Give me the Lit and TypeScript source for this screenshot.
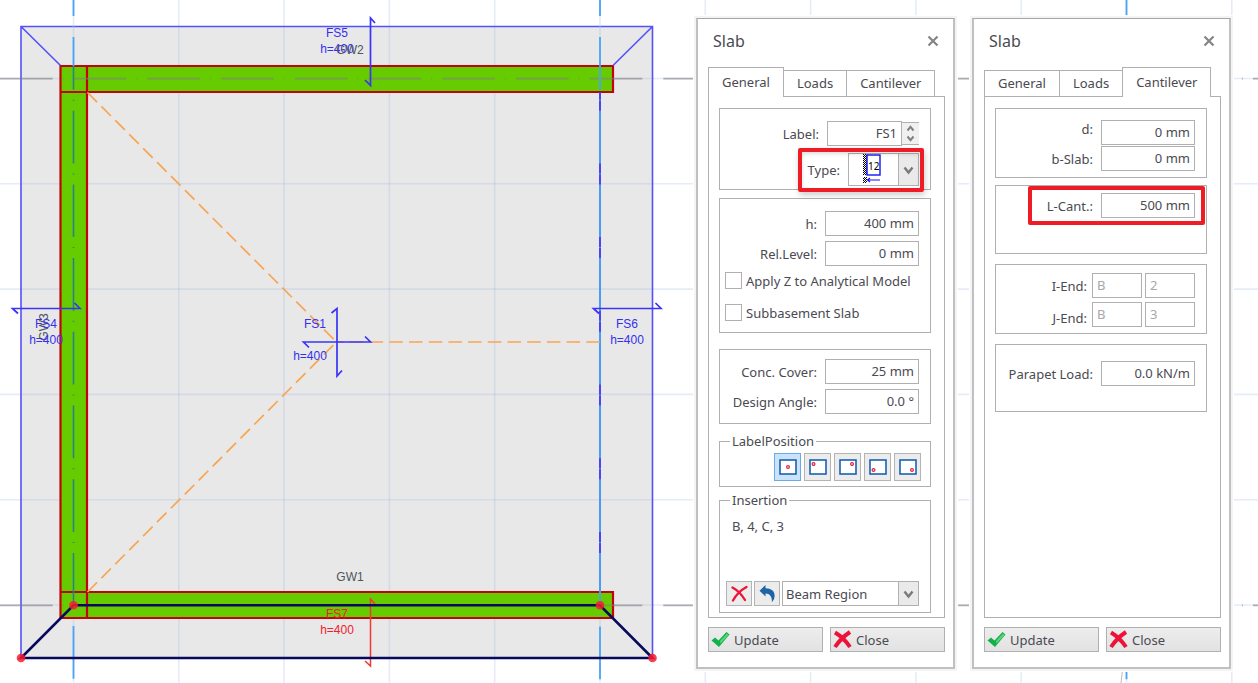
import { LitElement, html, svg, css, nothing } from "lit";
import { customElement, property, state } from "lit/decorators.js";
import { classMap } from "lit/directives/class-map.js";

type Tab = "General" | "Loads" | "Cantilever";
const TABS: Tab[] = ["General", "Loads", "Cantilever"];

const chevron = svg`<path d="M1.5 2.5 L5.5 7.5 L9.5 2.5" fill="none" stroke="#7a7a7a" stroke-width="2.4"/>`;

/** Plan view: grid, walls, slabs and their labels. */
@customElement("plan-view")
class PlanView extends LitElement {
  static styles = css`
    :host { display: block; }
    svg { display: block; width: 100%; height: 100%; }
    text { font: 12px "Liberation Sans", Arial, sans-serif; text-anchor: middle; }
    .grid { stroke: #96b4e1; stroke-opacity: 0.25; stroke-width: 1.6; }
    .slab { fill: #e8e8e8; }
    .wall { fill: #66cc00; }
    .wall-edge { fill: none; stroke: #c0040c; stroke-width: 2.2; }
    .edge { fill: none; stroke: #5450fa; stroke-width: 1.6; }
    .hinge { stroke: #3c34f4; stroke-width: 1.8; }
    .axis { stroke-dasharray: 52.7 10 1 10; fill: none; }
    .axis-h { stroke: #808080; stroke-opacity: 0.6; stroke-width: 1.8; }
    .axis-v { stroke: #4aa4fa; stroke-width: 1.8; }
    .axis-wall { stroke: #27858a; stroke-width: 1.6; }
    .yield { fill: none; stroke: #f8a552; stroke-width: 1.7; stroke-dasharray: 13.5 6.2; }
    .span { fill: none; stroke: #3a34f6; stroke-width: 1.7; }
    .name { fill: #3430f0; }
    .wall-name { fill: #4c5560; }
    .picked { fill: #f02028; }
    .span-picked { fill: none; stroke: #f0383a; stroke-width: 1.5; }
    .selection { fill: none; stroke: #08085c; stroke-width: 2.6; }
    .node { fill: #f81c30; fill-opacity: 0.85; }
    .stray { stroke: #bbb; }
  `;

  private tag(x: number, y: number, name: string, cls = "name", dx = 0, gap = 16) {
    return svg`<text class=${cls} x=${x} y=${y}>${name}</text>
      <text class=${cls} x=${x + dx} y=${y + gap}>h=400</text>`;
  }

  render() {
    const cols = Array.from({ length: 12 }, (_, i) => 73.5 + i * 105.3);
    const rows = Array.from({ length: 6 }, (_, i) => 78.5 + i * 105.3);
    return html`<svg role="img" aria-label="Slab plan">
      <rect class="slab" x="21" y="26" width="632" height="632" />
      ${cols.map((x) => svg`<line class="grid" x1=${x} y1="0" x2=${x} y2="100%"/>`)}
      ${rows.map((y) => svg`<line class="grid" x1="0" y1=${y} x2="100%" y2=${y}/>`)}
      <rect class="wall" x="61" y="66" width="552" height="26" />
      <rect class="wall" x="61" y="66" width="26" height="552" />
      <rect class="wall" x="61" y="592" width="552" height="26" />
      <path class="wall-edge" d="M60.5 66H613V92H60.5M60.5 592H613V618H60.5M60.5 65V619M87 66V618" />
      <path class="edge" d="M21 658V26.500H652.500V658M21 26.500L60.500 65.500M652.500 26.500L613 65.500" />
      <line class="hinge" x1="600" y1="92" x2="600" y2="592" />
      <line class="axis axis-h" x1="0" y1="78.700" x2="100%" y2="78.700" />
      <line class="axis axis-h" x1="0" y1="605.300" x2="100%" y2="605.300" />
      <line class="axis axis-v" x1="73.500" y1="-36.700" x2="73.500" y2="66" />
      <line class="axis axis-wall" stroke-dashoffset="29" x1="73.500" y1="66" x2="73.500" y2="605" />
      <line class="axis axis-v" x1="73.500" y1="626" x2="73.500" y2="683" />
      <line class="axis axis-v" x1="600" y1="-36.700" x2="600" y2="683" />
      <line class="axis axis-v" x1="1126.500" y1="-36.700" x2="1126.500" y2="683" />
      <line class="stray" x1="1122.500" y1="670" x2="1121" y2="683" />
      <path class="yield" d="M87.500 92.500L336.500 342M87.500 592L336.500 342" />
      <line class="yield" stroke-dashoffset="5.800" x1="336" y1="342" x2="600" y2="342" />
      <path class="span" d="M309 347.500L303.500 342H370.500L365 336.500" />
      <path class="span" d="M331.500 313L337 308.500V376L342 370.500" />
      <path class="span" d="M18 313.500L12.500 308.500H80L74.500 303" />
      <path class="span" d="M599 313.500L593.500 308.500H661L655.500 303" />
      <path class="span" d="M375 23L370.500 18V85.500L365 80" />
      ${this.tag(337, 37, "FS5")}
      <text class="wall-name" x="350" y="54">GW2</text>
      <text class="wall-name" x="350" y="581">GW1</text>
      <text class="wall-name" transform="translate(48 327) rotate(-90)">GW3</text>
      ${this.tag(315, 328, "FS1", "name", -5, 32)}
      ${this.tag(46, 328, "FS4")}
      ${this.tag(627, 328, "FS6")}
      ${this.tag(337, 618, "FS7", "picked")}
      <path class="span-picked" d="M375 604L370.500 599V666L365 661" />
      <path class="selection" d="M73.500 605.300H600L652.500 658H21Z" />
      ${[[73.5, 605.3], [600, 605.3], [652.5, 658], [21, 658]].map(
        ([x, y]) => svg`<circle class="node" cx=${x} cy=${y} r="4.3"/>`
      )}
    </svg>`;
  }
}

/** Slab properties dialog. */
@customElement("slab-dialog")
class SlabDialog extends LitElement {
  @property() tab: Tab = "General";
  @state() private position = 0;

  static styles = css`
    :host {
      display: flex;
      flex-direction: column;
      box-sizing: border-box;
      width: 259px;
      padding: 0 8px 16px 10px;
      background: #fff;
      border: 2px solid #c0c0c0;
      border-top: 1px solid #a6a6a6;
      box-shadow: 0 0 0 2px #f4f4f4, 0 0 0 3px #fff;
      font: 13px/18px "Noto Sans", "Open Sans", Tahoma, sans-serif;
      color: #4a4a52;
    }
    * { box-sizing: border-box; }
    button, input, select { font: inherit; color: inherit; margin: 0; border-radius: 0; }
    header { display: flex; align-items: center; justify-content: space-between; height: 48px; padding: 0 4px 4px 5px; }
    h1 { margin: 0; font-size: 16px; line-height: 24px; font-weight: 400; }
    .close { display: flex; width: 16px; height: 16px; padding: 2px; border: 0; background: none; }
    .tabs { display: flex; align-items: flex-end; height: 29px; position: relative; z-index: 1; }
    .tab { height: 26px; padding: 0 13px 1px; background: #fff; border: 1px solid #b0b0b0; border-bottom: 0; margin-left: -1px; }
    .tab:first-child { margin-left: 0; }
    .tab.active { height: 30px; padding-bottom: 2px; margin-bottom: -1px; }
    .panel { flex: 1; padding: 11px 13px 4px 10px; border: 1px solid #b0b0b0; }
    .group {
      display: flex;
      flex-direction: column;
      min-width: 0;
      margin: 0;
      border: 1px solid #b0b0b0;
      padding: 8px 11px 6px 5px;
    }
    .group + .group { margin-top: 8px; }
    legend { padding: 0 2px; margin-left: 5px; height: 18px; }
    .identity { padding: 12px 11px 3px 5px; gap: 7px; }
    .size { padding-top: 12px; padding-bottom: 11px; gap: 5px; }
    .group.cover { margin-top: 16px; padding-top: 9px; padding-bottom: 9px; gap: 5px; }
    .label-position { padding: 3px 9px 5px 5px; }
    .group.insertion { margin-top: 4px; padding-top: 8px; }
    .section { padding-top: 11px; gap: 1px; }
    .group.cantilever { margin-top: 7px; padding-top: 7px; padding-bottom: 35px; }
    .group.ends { margin-top: 10px; gap: 4px; }
    .group.parapet { margin-top: 10px; padding: 16px 11px 25px 5px; }
    .row { display: flex; align-items: center; justify-content: flex-end; gap: 8px; }
    .row.top { align-items: flex-start; }
    .row.bottom { align-items: flex-end; }
    .row.pair { gap: 3px; }
    .row.pair label { margin-right: 2px; }
    .field { width: 94px; height: 25px; padding: 0 4px 2px; border: 1px solid #b0b0b0; background: #fff; text-align: right; }
    .field.short { width: 50px; text-align: left; }
    .field.short:disabled { color: #a8a8a8; }
    .spin { display: flex; }
    .spin .field { width: 75px; }
    .arrows { display: flex; flex-direction: column; width: 17px; height: 23px; margin-top: 1px; background: #f0f0f0; border: solid #b0b0b0; border-width: 1px 0; }
    .arrows button { flex: 1; display: grid; place-items: center; padding: 0; border: 0; background: none; min-height: 0; }
    .mark { display: flex; align-items: center; gap: 8px; position: relative; }
    .mark::after {
      content: "";
      position: absolute;
      inset: -5px -5px -6px -10px;
      border: 4px solid #ee1c25;
      border-radius: 2px;
      box-shadow: 1px 3px 6px #0003, inset 0 2px 4px #0002;
      pointer-events: none;
    }
    .mark.wide::after { inset: -7px -10px -7px -19px; box-shadow: none; }
    .combo { position: relative; display: flex; flex: 1; height: 25px; }
    .combo select { width: 100%; padding: 0 24px 0 3px; border: 1px solid #b0b0b0; background: #fff; appearance: none; }
    .combo .drop {
      position: absolute;
      inset: 0 0 0 auto;
      width: 21px;
      display: grid;
      place-items: center;
      border: 1px solid #b0b0b0;
      background: #eaeaea;
      pointer-events: none;
    }
    .combo.type { flex: none; width: 71px; height: 33px; }
    .combo.type select { padding-left: 19px; padding-bottom: 8px; font-size: 10px; color: #000; }
    .combo .glyph { position: absolute; left: 15px; top: 1px; pointer-events: none; }
    .check { display: flex; align-items: center; gap: 4px; height: 17px; margin-top: 1px; }
    .check + .check { margin-top: 10px; }
    .check input { appearance: none; width: 17px; height: 17px; border: 1px solid #b0b0b0; background: #fff; }
    .positions { display: flex; justify-content: flex-end; gap: 3px; }
    .icon { display: grid; place-items: center; padding: 0; border: 1px solid #b4b4b4; background: #ececec; width: 26px; height: 25px; }
    .positions .icon { width: 27px; height: 28px; }
    .icon.on { background: #c9e3fb; border-color: #6aaae8; }
    .where { margin: 0 0 46px 7px; }
    .tools { display: flex; gap: 2px; padding-left: 1px; }
    .actions { display: flex; gap: 7px; margin-top: 9px; margin-bottom: -1px; }
    .action { flex: 1; display: flex; align-items: center; gap: 4px; height: 25px; padding: 0 2px; border: 1px solid #b0b0b0; background: linear-gradient(#ededed, #e2e2e2); }
  `;

  private field(id: string, label: string, value: string, cls = "") {
    return html`<div class="row ${cls}">
      <label for=${id}>${label}</label><input class="field" id=${id} .value=${value} />
    </div>`;
  }

  private drop() {
    return html`<span class="drop"><svg width="11" height="10">${chevron}</svg></span>`;
  }

  private general() {
    const dots = [[9, 8], [4.5, 5], [13, 5], [4.5, 11], [13, 11]];
    const names = ["Centre", "Top left", "Top right", "Bottom left", "Bottom right"];
    return html`
      <fieldset class="group identity">
        <div class="row">
          <label for="label">Label:</label>
          <div class="spin">
            <input class="field" id="label" .value=${"FS1"} />
            <div class="arrows">
              <button aria-label="Next"><svg width="9" height="7"><path d="M1.500 5.500L4.500 1.800L7.500 5.500" fill="none" stroke="#808080" stroke-width="2"/></svg></button>
              <button aria-label="Previous"><svg width="9" height="7"><path d="M1.500 1.500L4.500 5.200L7.500 1.500" fill="none" stroke="#808080" stroke-width="2"/></svg></button>
            </div>
          </div>
        </div>
        <div class="row">
          <div class="mark">
            <label for="type">Type:</label>
            <div class="combo type">
              <select id="type"><option>12</option></select>
              <svg class="glyph" width="18" height="30">
                <defs><pattern id="hatch" width="2" height="2" patternUnits="userSpaceOnUse">
                  <rect width="1" height="1"/><rect x="1" y="1" width="1" height="1"/>
                </pattern></defs>
                <rect width="4" height="21" fill="url(#hatch)"/>
                <rect y="23" width="4" height="6" fill="url(#hatch)"/>
                <rect x="4" y="1" width="13" height="20" fill="none" stroke="#1414f0" stroke-width="1.4"/>
                <path d="M4 26H17M7 24L4.500 26L7 28" fill="none" stroke="#1414f0" stroke-width="1.2"/>
              </svg>
              ${this.drop()}
            </div>
          </div>
        </div>
      </fieldset>
      <fieldset class="group size">
        ${this.field("h", "h:", "400 mm")}
        ${this.field("level", "Rel.Level:", "0 mm")}
        <label class="check"><input type="checkbox" />Apply Z to Analytical Model</label>
        <label class="check"><input type="checkbox" />Subbasement Slab</label>
      </fieldset>
      <fieldset class="group cover">
        ${this.field("cover", "Conc. Cover:", "25 mm")}
        ${this.field("angle", "Design Angle:", "0.0 °")}
      </fieldset>
      <fieldset class="group label-position">
        <legend>LabelPosition</legend>
        <div class="positions">
          ${dots.map(
            ([x, y], i) => html`<button
              class=${classMap({ icon: true, on: i === this.position })}
              aria-label=${names[i]}
              @click=${() => (this.position = i)}
            >
              <svg width="18" height="16">
                <rect x="1" y="1" width="16" height="14" fill="#fff" stroke="#1a62b0" stroke-width="1.6"/>
                <circle cx=${x} cy=${y} r="1.400" fill="#fff" stroke="#e02040" stroke-width="1.2"/>
              </svg>
            </button>`
          )}
        </div>
      </fieldset>
      <fieldset class="group insertion">
        <legend>Insertion</legend>
        <div class="where">B, 4, C, 3</div>
        <div class="tools">
          <button class="icon" aria-label="Delete">
            <svg width="17" height="17"><path d="M1.500 2.500C6 5 11 10 14 15M15.500 2C10 5 5 10 2 15.500" fill="none" stroke="#ee1436" stroke-width="2.3" stroke-linecap="round"/></svg>
          </button>
          <button class="icon" aria-label="Undo">
            <svg width="17" height="18"><path d="M6.500 0V3.300C12.500 3.300 15.800 6.500 15.600 11C15.500 13.500 14.500 15.500 12.800 17.200C13.300 12.500 11.500 8.500 6.500 8.400V11.500L0.500 5.700Z" fill="#1f64a4"/></svg>
          </button>
          <div class="combo">
            <select aria-label="Region"><option>Beam Region</option></select>
            ${this.drop()}
          </div>
        </div>
      </fieldset>
    `;
  }

  private cantilever() {
    const end = (id: string, label: string, a: string, b: string, cls = "") => html`<div class="row pair ${cls}">
      <label for=${id}>${label}</label>
      <input class="field short" id=${id} disabled .value=${a} />
      <input class="field short" aria-label=${label} disabled .value=${b} />
    </div>`;
    return html`
      <fieldset class="group section">
        ${this.field("d", "d:", "0 mm", "top")} ${this.field("b", "b-Slab:", "0 mm")}
      </fieldset>
      <fieldset class="group cantilever">
        <div class="row">
          <div class="mark wide">
            <label for="lcant">L-Cant.:</label><input class="field" id="lcant" .value=${"500 mm"} />
          </div>
        </div>
      </fieldset>
      <fieldset class="group ends">
        ${end("iend", "I-End:", "B", "2")} ${end("jend", "J-End:", "B", "3", "bottom")}
      </fieldset>
      <fieldset class="group parapet">${this.field("parapet", "Parapet Load:", "0.0 kN/m")}</fieldset>
    `;
  }

  render() {
    return html`
      <header>
        <h1>Slab</h1>
        <button class="close" aria-label="Close window">
          <svg width="12" height="12"><path d="M1.500 1.500L10.500 10.500M10.500 1.500L1.500 10.500" stroke="#858585" stroke-width="2.2"/></svg>
        </button>
      </header>
      <div class="tabs" role="tablist">
        ${TABS.map(
          (t) => html`<button
            role="tab"
            class=${classMap({ tab: true, active: t === this.tab })}
            aria-selected=${t === this.tab}
            @click=${() => (this.tab = t)}
          >${t}</button>`
        )}
      </div>
      <div class="panel" role="tabpanel">
        ${this.tab === "General" ? this.general() : this.tab === "Cantilever" ? this.cantilever() : nothing}
      </div>
      <div class="actions">
        <button class="action">
          <svg width="19" height="17"><path d="M0.500 9.500L4 6.500L7.500 9.500L15.500 1L18.500 3.500L8 16Z" fill="#12b24a"/><path d="M9 10L16 2.500L17.500 4L9.500 12.500Z" fill="#5fd27c"/></svg>
          Update
        </button>
        <button class="action">
          <svg width="19" height="19"><path d="M2 2.500C8 6 13 11 17 17M17 2C11 6 6 11 2 17" fill="none" stroke="#ee1238" stroke-width="4"/></svg>
          Close
        </button>
      </div>
    `;
  }
}

@customElement("app-root")
class AppRoot extends LitElement {
  static styles = css`
    :host { display: block; position: relative; min-height: 100vh; background: #fff; overflow: hidden; }
    plan-view { position: absolute; inset: 0; }
    .dialogs { position: relative; display: flex; justify-content: flex-end; gap: 17px; padding: 18px 27px 13px; }
  `;

  render() {
    return html`
      <plan-view></plan-view>
      <div class="dialogs">
        <slab-dialog tab="General"></slab-dialog>
        <slab-dialog tab="Cantilever"></slab-dialog>
      </div>
    `;
  }
}
